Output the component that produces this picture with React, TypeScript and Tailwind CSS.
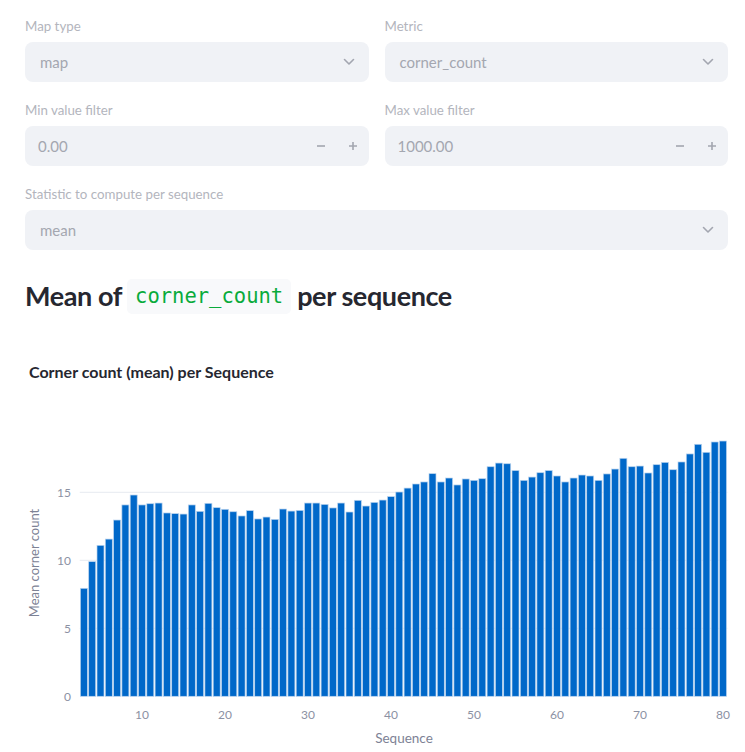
import React from "react";

const FONT = { fontFamily: "Lato, 'Noto Sans', sans-serif" };

const values = [
  7.94, 9.9, 11.1, 11.56, 12.96, 14.07, 14.8, 14.07, 14.16, 14.21, 13.48, 13.43, 13.4, 14.07, 13.6, 14.19,
  13.87, 13.75, 13.57, 13.26, 13.65, 13.04, 13.18, 13.01, 13.77, 13.62, 13.67, 14.21, 14.21, 14.11, 13.85,
  14.21, 13.55, 14.41, 13.99, 14.26, 14.43, 14.68, 15.02, 15.31, 15.61, 15.76, 16.37, 15.76, 16.05, 15.54,
  15.98, 15.88, 16.0, 16.88, 17.15, 17.1, 16.6, 15.88, 16.12, 16.44, 16.6, 16.2, 15.76, 16.05, 16.27, 16.2,
  15.88, 16.35, 16.71, 17.5, 16.88, 16.93, 16.42, 17.03, 17.2, 16.66, 17.23, 17.82, 18.53, 17.94, 18.7, 18.77,
];

function Chevron() {
  return (
    <svg width="12" height="8" viewBox="0 0 12 8" fill="none">
      <path d="M1.5 1.5 L6 6 L10.5 1.5" stroke="#a3a6b0" strokeWidth="1.6" strokeLinecap="round" strokeLinejoin="round" />
    </svg>
  );
}

function Label({ children }: { children: React.ReactNode }) {
  return <div className="h-[21px] text-[13.3px] leading-[21px] text-[#b3b5bd] mb-[5px]">{children}</div>;
}

function SelectBox({ value }: { value: string }) {
  return (
    <div className="h-[40px] rounded-[8px] bg-[#f0f2f6] flex items-center justify-between pl-[15px] pr-[14px]">
      <span className="text-[15px] text-[#a4a7b0]">{value}</span>
      <Chevron />
    </div>
  );
}

function NumberBox({ value }: { value: string }) {
  return (
    <div className="h-[40px] rounded-[8px] bg-[#f0f2f6] flex items-center justify-between pl-[13px] pr-[11px]">
      <span className="text-[15px] text-[#a4a7b0]">{value}</span>
      <div className="flex items-center gap-[22px]">
        <svg width="10" height="10" viewBox="0 0 10 10">
          <path d="M1 5 H9" stroke="#a3a6b0" strokeWidth="1.6" />
        </svg>
        <svg width="10" height="10" viewBox="0 0 10 10">
          <path d="M1 5 H9 M5 1 V9" stroke="#a3a6b0" strokeWidth="1.6" />
        </svg>
      </div>
    </div>
  );
}

function Chart() {
  const y0 = 696.3;
  const k = 13.6;
  const xOf = (s: number) => 79.75 + (s - 2.5) * 8.3;
  const bw = 7.0;
  const xLeft = 79.75;
  const xRight = 727.4;
  const tickColor = "#8c91a3";
  return (
    <svg width="720" height="422" className="block overflow-visible" style={FONT}>
      <g transform="translate(-25,-330)">
        <text x="29" y="378" fontSize="16" fontWeight="700" fill="#262730">
          Corner count (mean) per Sequence
        </text>
        {[5, 10, 15].map((v) => (
          <line key={v} x1={xLeft} x2={xRight} y1={y0 - v * k} y2={y0 - v * k} stroke="#e6eaf1" strokeWidth="1" />
        ))}
        {[0, 5, 10, 15].map((v) => (
          <text key={v} x="71" y={y0 - v * k + 4.5} fontSize="12" textAnchor="end" fill={tickColor}>
            {v}
          </text>
        ))}
        {values.map((v, i) => {
          const s = i + 3;
          const h = v * k;
          return (
            <rect
              key={s}
              x={xOf(s) - bw / 2}
              y={y0 - h}
              width={bw}
              height={h}
              fill="#0068c9"
              stroke="#b9d3ee"
              strokeWidth="0.7"
            />
          );
        })}
        {[10, 20, 30, 40, 50, 60, 70, 80].map((s) => (
          <text key={s} x={xOf(s)} y="719" fontSize="12" textAnchor="middle" fill={tickColor}>
            {s}
          </text>
        ))}
        <text x="404" y="743" fontSize="13.5" textAnchor="middle" fill="#7d8295">
          Sequence
        </text>
        <text
          x="0"
          y="0"
          fontSize="13"
          textAnchor="middle"
          fill="#7d8295"
          transform="translate(39,563) rotate(-90)"
        >
          Mean corner count
        </text>
      </g>
    </svg>
  );
}

export default function App() {
  return (
    <div className="w-[745px] h-[752px] bg-white overflow-hidden" style={FONT}>
      <div className="pl-[25px] pr-[17px] pt-[16px]">
        <div className="grid grid-cols-2 gap-x-[16px]">
          <div>
            <Label>Map type</Label>
            <SelectBox value="map" />
          </div>
          <div>
            <Label>Metric</Label>
            <SelectBox value="corner_count" />
          </div>
          <div className="mt-[18px]">
            <Label>Min value filter</Label>
            <NumberBox value="0.00" />
          </div>
          <div className="mt-[18px]">
            <Label>Max value filter</Label>
            <NumberBox value="1000.00" />
          </div>
        </div>
        <div className="mt-[18px]">
          <Label>Statistic to compute per sequence</Label>
          <SelectBox value="mean" />
        </div>
        <div className="mt-[26px] h-[40px] flex items-center text-[27px] font-bold text-[#262730] tracking-[-0.4px]">
          <span>Mean of</span>
          <span
            className="ml-[5px] mr-[6px] h-[35px] px-[8px] flex items-center rounded-[5px] bg-[#f8f9fb] text-[20.5px] font-normal text-[#09ab3b] tracking-normal"
            style={{ fontFamily: "'DejaVu Sans Mono', 'Liberation Mono', monospace" }}
          >
            corner_count
          </span>
          <span>per sequence</span>
        </div>
        <div className="mt-[14px]">
          <Chart />
        </div>
      </div>
    </div>
  );
}
